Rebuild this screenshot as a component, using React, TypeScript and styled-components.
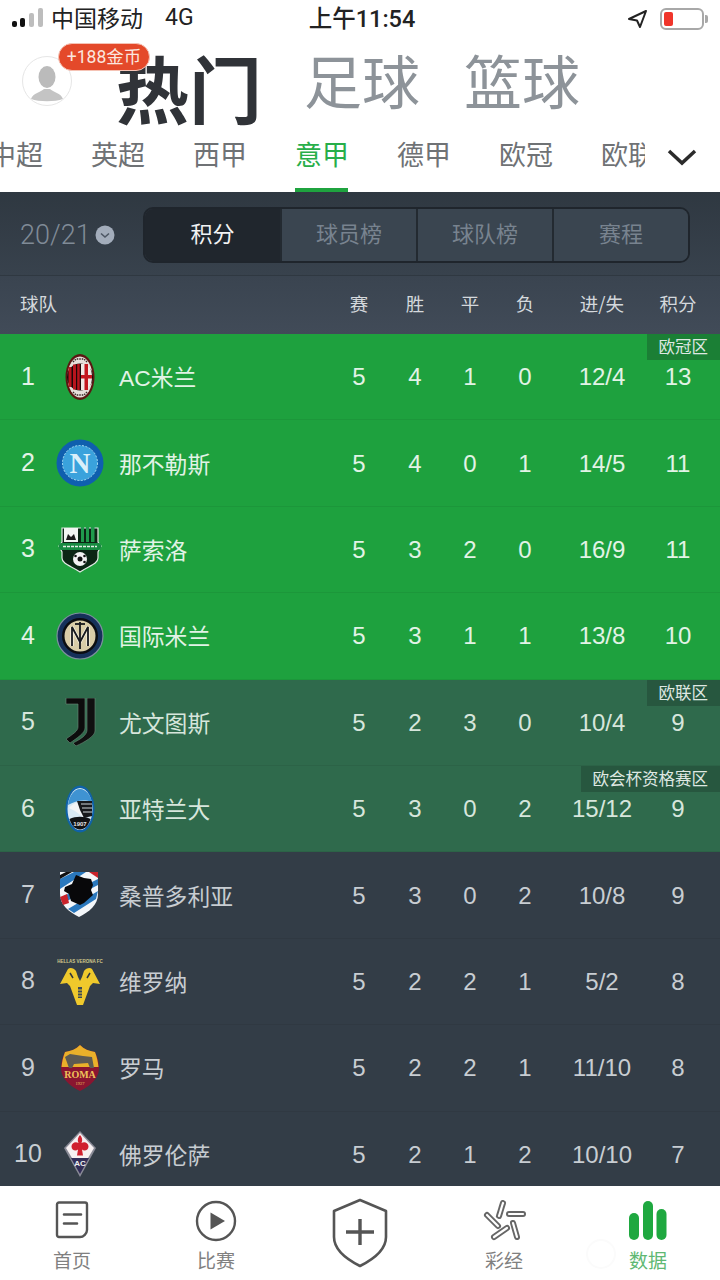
import React from 'react'
import styled, { createGlobalStyle } from 'styled-components'

const GlobalStyle = createGlobalStyle`
  html, body {
    margin: 0;
    padding: 0;
    background: #fff;
  }
  * {
    box-sizing: border-box;
  }
`

const Screen = styled.div`
  position: relative;
  width: 720px;
  height: 1280px;
  overflow: hidden;
  display: flex;
  flex-direction: column;
  background: #fff;
  font-family: Roboto, 'Noto Sans CJK SC', sans-serif;
`

const StatusBar = styled.div`
  height: 38px;
  flex: none;
  display: grid;
  grid-template-columns: 1fr auto 1fr;
  align-items: center;
  padding: 0 16px 0 12px;
  color: #222;
  font-size: 23px;
`

const StatusLeft = styled.div`
  display: flex;
  align-items: center;
  gap: 7px;
`

const StatusRight = styled.div`
  display: flex;
  align-items: center;
  justify-content: flex-end;
  gap: 12px;
`

const Carrier = styled.span`
  margin-top: -4px;
`

const Network = styled.span`
  margin: -4px 0 0 15px;
  font-size: 23px;
`

const Clock = styled.div`
  margin: -4px 0 0 8px;
  font-weight: 500;
  font-size: 23.5px;
`

const Battery = styled.div`
  width: 44px;
  height: 22px;
  border: 2px solid #a8a8a8;
  border-radius: 6px;
  padding: 2px;
  position: relative;

  &::before {
    content: '';
    display: block;
    width: 9px;
    height: 100%;
    background: #f0352b;
    border-radius: 2px;
  }

  &::after {
    content: '';
    position: absolute;
    right: -6px;
    top: 5px;
    width: 3px;
    height: 8px;
    background: #a8a8a8;
    border-radius: 0 2px 2px 0;
  }
`

const Header = styled.div`
  height: 92px;
  flex: none;
  display: flex;
  align-items: flex-start;
  padding-left: 22px;
`

const AvatarWrap = styled.div`
  position: relative;
  width: 50px;
  height: 50px;
  margin-top: 18px;
  margin-right: 44px;
`

const Avatar = styled.div`
  width: 50px;
  height: 50px;
  border-radius: 50%;
  border: 1px solid #e6e6e6;
  overflow: hidden;
  background: #fff;
`

const CoinBadge = styled.div`
  position: absolute;
  left: 36px;
  top: -13px;
  width: 92px;
  height: 28px;
  z-index: 2;
  border-radius: 14px;
  background: #e4492a;
  border: 1px solid #f5c3b5;
  color: #fbe6df;
  font-size: 17.5px;
  line-height: 26px;
  text-align: center;
  white-space: nowrap;
`

const SportTitle = styled.div<{ $active?: boolean }>`
  font-family: 'Noto Sans CJK SC', sans-serif;
  font-size: ${(p) => (p.$active ? 73 : 58)}px;
  font-weight: ${(p) => (p.$active ? 700 : 400)};
  line-height: ${(p) => (p.$active ? 84 : 72)}px;
  color: ${(p) => (p.$active ? '#303338' : '#8d9399')};
  margin-right: ${(p) => (p.$active ? 42 : 44)}px;
  margin-top: ${(p) => (p.$active ? 6 : 5)}px;
  white-space: nowrap;
`

const LeagueBar = styled.div`
  height: 62px;
  flex: none;
  display: flex;
  padding-right: 24px;
`

const LeagueScroller = styled.div`
  width: 645px;
  overflow: hidden;
  flex: none;
`

const LeagueTrack = styled.div`
  display: flex;
  gap: 49px;
  margin-left: -11px;
  height: 100%;
`

const LeagueTab = styled.div<{ $active?: boolean }>`
  flex: none;
  width: 53px;
  height: 100%;
  padding-top: 4px;
  font-family: 'Noto Sans CJK SC', sans-serif;
  font-size: 27px;
  line-height: 40px;
  white-space: nowrap;
  color: ${(p) => (p.$active ? '#27ae49' : '#6f7275')};
  border-bottom: 4px solid ${(p) => (p.$active ? '#1fa33f' : 'transparent')};
`

const ExpandButton = styled.div`
  flex: 1;
  display: flex;
  align-items: center;
  justify-content: center;
  padding: 0 0 8px 22px;
`

const Board = styled.div`
  flex: 1;
  min-height: 0;
  overflow: hidden;
  background: #333d47;
`

const Toolbar = styled.div`
  height: 84px;
  display: flex;
  align-items: center;
  padding: 2px 30px 0 20px;
  background: linear-gradient(#2f3841, #38424d);
  border-bottom: 1px solid #2f3841;
`

const Season = styled.div`
  display: flex;
  align-items: center;
  gap: 4px;
  width: 123px;
  flex: none;
  color: #808b97;
  font-size: 27px;
  font-weight: 300;
`

const Segments = styled.div`
  flex: 1;
  height: 56px;
  display: grid;
  grid-template-columns: 135px 136px 136px 1fr;
  border: 2px solid #1f252c;
  border-radius: 10px;
  overflow: hidden;
`

const Segment = styled.div<{ $active?: boolean }>`
  display: flex;
  align-items: center;
  justify-content: center;
  padding-bottom: 5px;
  font-family: 'Noto Sans CJK SC', sans-serif;
  font-size: 22px;
  color: ${(p) => (p.$active ? '#f2f3f4' : '#78838f')};
  background: ${(p) => (p.$active ? '#20262d' : '#3a4550')};
  border-left: ${(p) => (p.$active ? 'none' : '2px solid #232a31')};
`

const columns = '56px 48px 227px 56px 56px 54px 56px 98px 54px 15px'

const TableHead = styled.div`
  height: 58px;
  display: grid;
  grid-template-columns: ${columns};
  align-items: center;
  padding-bottom: 4px;
  background: linear-gradient(#3a4450, #414b58);
  color: #d4d8dc;
  font-family: 'Noto Sans CJK SC', sans-serif;
  font-size: 18.5px;
`

const TeamHead = styled.div`
  grid-column: 1 / span 3;
  padding-left: 20px;
`

const StatHead = styled.div`
  text-align: center;
  white-space: nowrap;
`

const zoneBackground = {
  top: '#1ea13e',
  mid: '#2f6a4c',
  none: '#333d47',
}

const zoneColor = {
  top: '#e2f3e6',
  mid: '#d7e6dc',
  none: '#c8cdd2',
}

type Zone = keyof typeof zoneBackground

const Row = styled.div<{ $zone: Zone }>`
  position: relative;
  height: 86.4px;
  display: grid;
  grid-template-columns: ${columns};
  align-items: center;
  background: ${(p) => zoneBackground[p.$zone]};
  color: ${(p) => zoneColor[p.$zone]};
  border-bottom: 1px solid rgba(0, 0, 0, 0.06);
  font-family: 'Liberation Sans', 'Noto Sans CJK SC', sans-serif;
`

const Rank = styled.div`
  text-align: center;
  font-size: 25px;
  margin-top: -1px;
`

const Crest = styled.div`
  width: 48px;
  height: 48px;
`

const TeamName = styled.div`
  padding-left: 15px;
  font-size: 22.8px;
  white-space: nowrap;
`

const Stat = styled.div`
  text-align: center;
  margin-top: 1px;
  font-size: 24px;
`

const ZoneTag = styled.div`
  position: absolute;
  right: 0;
  top: 0;
  height: 26px;
  padding: 0 12px;
  background: rgba(20, 40, 34, 0.28);
  font-family: 'Noto Sans CJK SC', sans-serif;
  font-size: 16.5px;
  line-height: 24px;
  color: #dfe8e2;
`

const TabBar = styled.div`
  height: 94px;
  flex: none;
  display: grid;
  grid-template-columns: repeat(5, 144px);
  background: #fff;
`

const TabItem = styled.div<{ $active?: boolean }>`
  display: flex;
  flex-direction: column;
  align-items: center;
  padding-top: 14px;
  font-family: 'Noto Sans CJK SC', sans-serif;
  font-size: 19px;
  line-height: 24px;
  color: ${(p) => (p.$active ? '#5fb873' : '#808080')};
`

const TabIcon = styled.div`
  height: 48px;
  display: flex;
  align-items: flex-start;
  justify-content: center;
`

const ShieldTab = styled.div`
  display: flex;
  justify-content: center;
  padding-top: 12px;
`

const Watermark = styled.div`
  position: absolute;
  left: 586px;
  top: 1239px;
  width: 30px;
  height: 30px;
  border: 2px solid #fbfbfb;
  border-radius: 50%;
`

const Signal = () => (
  <svg width="32" height="24" viewBox="0 0 32 24">
    <rect x="0" y="14" width="5" height="6" rx="2" fill="#111" />
    <rect x="8" y="11" width="5" height="9" rx="2" fill="#111" />
    <rect x="17" y="6" width="5" height="14" rx="2" fill="#bdbdbd" />
    <rect x="26" y="1" width="5" height="19" rx="2" fill="#bdbdbd" />
  </svg>
)

const LocationArrow = () => (
  <svg width="21" height="20" viewBox="0 0 21 20">
    <path d="M19 2 2 10l8 1.5L13 18z" fill="none" stroke="#222" strokeWidth="2" strokeLinejoin="round" />
  </svg>
)

const Chevron = () => (
  <svg width="30" height="18" viewBox="0 0 30 18">
    <path d="M2 3l13 12L28 3" fill="none" stroke="#2b2b2b" strokeWidth="3.5" />
  </svg>
)

const SeasonChevron = () => (
  <svg width="20" height="20" viewBox="0 0 20 20">
    <circle cx="10" cy="10" r="9.5" fill="#a3adbb" />
    <path d="M6 8.5l4 3.5 4-3.5" fill="none" stroke="#4d5764" strokeWidth="1.6" />
  </svg>
)

const AvatarFigure = () => (
  <svg width="48" height="48" viewBox="0 0 48 48">
    <ellipse cx="24" cy="20" rx="8.5" ry="11" fill="#bbb" />
    <path d="M8 42c2-6 10-7 13-10h6c3 3 11 4 13 10-8 3-24 3-32 0z" fill="#c4c4c4" />
  </svg>
)

const MilanCrest = () => (
  <svg viewBox="0 0 48 48">
    <ellipse cx="24" cy="24" rx="14.5" ry="23" fill="#5a1712" />
    <ellipse cx="24" cy="24" rx="12.5" ry="20.5" fill="#e6dfda" />
    <path d="M17 9l3-3h8l3 3M17 39l3 3h8l3-3" fill="none" stroke="#3a2a28" strokeWidth="1.4" strokeDasharray="1.5 1" />
    <ellipse cx="24" cy="24" rx="13" ry="13.5" fill="#1c0808" />
    <rect x="12.5" y="14" width="3" height="20" rx="1" fill="#b8141d" />
    <rect x="17" y="11.5" width="3" height="25" fill="#b8141d" />
    <rect x="21.2" y="11" width="2.5" height="26" fill="#b8141d" />
    <path d="M25 11h5c3 1 6 6 6 13s-3 12-6 13h-5z" fill="#efe9e6" />
    <rect x="28.5" y="11" width="3.5" height="26" fill="#c3171f" />
    <rect x="25" y="22" width="11" height="3.5" fill="#c3171f" />
  </svg>
)

const NapoliCrest = () => (
  <svg viewBox="0 0 48 48">
    <circle cx="24" cy="24" r="23.5" fill="#0f5fae" />
    <circle cx="24" cy="24" r="17.5" fill="#3aa2dc" stroke="#a8dcf3" strokeWidth="1" strokeDasharray="2 1.5" />
    <text x="24" y="34" textAnchor="middle" fontFamily="'Liberation Serif', serif" fontSize="29" fontWeight="700" fill="#d9f0fa">
      N
    </text>
  </svg>
)

const SassuoloCrest = () => (
  <svg viewBox="0 0 48 48">
    <path d="M6 3h36v14l3 4-3 6v6c0 6-9 8-18 14-9-6-18-8-18-14v-6l-3-6 3-4z" fill="#0b2514" stroke="#dfeae2" strokeWidth="1.2" />
    <rect x="8" y="3" width="14" height="14" fill="#f2f5f2" />
    <path d="M10 15l2-6 3 3 3-3 2 6z" fill="#1b1b1b" />
    <rect x="25" y="2" width="3" height="15" fill="#1f9a4c" />
    <rect x="30" y="2" width="3" height="15" fill="#1f9a4c" />
    <rect x="35" y="2" width="3.5" height="15" fill="#1f9a4c" />
    <rect x="3" y="18" width="42" height="7" rx="2" fill="#178a41" />
    <path d="M7 21.5h34" stroke="#e4efe7" strokeWidth="1.6" strokeDasharray="3 1" />
    <circle cx="24" cy="34" r="7" fill="#f3f3f3" />
    <circle cx="24" cy="34" r="2.5" fill="#111" />
    <circle cx="19.5" cy="31" r="1.3" fill="#111" />
    <circle cx="28.5" cy="37" r="1.3" fill="#111" />
    <circle cx="28.5" cy="31" r="1.3" fill="#111" />
  </svg>
)

const InterCrest = () => (
  <svg viewBox="0 0 48 48">
    <circle cx="24" cy="24" r="23" fill="#16315a" stroke="#7d8f9e" strokeWidth="1.2" />
    <circle cx="24" cy="24" r="18" fill="#0b0d11" />
    <circle cx="24" cy="24" r="15.5" fill="#d9cda8" />
    <g fill="none" stroke="#f4eedd" strokeWidth="3.6">
      <path d="M16 34V15l8 15 8-15v19" />
    </g>
    <g fill="none" stroke="#17191e" strokeWidth="1.8">
      <path d="M16 34V15l8 15 8-15v19" />
      <path d="M24 10v27" />
      <path d="M19 12h10" />
    </g>
  </svg>
)

const JuveCrest = () => (
  <svg viewBox="0 0 48 48">
    <g stroke="#6b8a78" strokeWidth="0.6">
      <path d="M10 0h19v30c0 5-8 10-15 15l-4-4c7-5 12-8 12-12V6H10z" fill="#0c0c0c" />
      <path d="M31 0h8v33c0 5-10 11-19 15l-3-3c8-4 14-8 14-13z" fill="#101010" />
    </g>
  </svg>
)

const AtalantaCrest = () => (
  <svg viewBox="0 0 48 48">
    <ellipse cx="24" cy="24" rx="14.5" ry="23.5" fill="#0f62a8" />
    <ellipse cx="24" cy="24" rx="12.5" ry="21" fill="#d8e8f3" />
    <path d="M12 20c1-9 6-16 12-16s11 7 12 13c-8-3-17-1-24 3z" fill="#3f93d2" />
    <path d="M13 23c5-6 13-8 23-6v13l-9 2-8-6z" fill="#f2f4f6" />
    <path d="M21 16h15v15l-8 2-4-8z" fill="#17181b" />
    <path d="M25 19h11M26 23h10M27 27h9" stroke="#cfd4d8" strokeWidth="1" />
    <path d="M13.5 34c6-3 15-3 21 0-2 7-6 10.5-10.5 10.5S15.5 41 13.5 34z" fill="#101114" />
    <text x="24" y="41" textAnchor="middle" fontFamily="'Liberation Sans', sans-serif" fontSize="6" fontWeight="700" fill="#e8e8e8">
      1907
    </text>
  </svg>
)

const SampdoriaCrest = () => (
  <svg viewBox="0 0 48 48">
    <path d="M4 1h38v22c0 11-9 18-19 23C13 41 4 34 4 23z" fill="#f4f7fa" />
    <path d="M4 8 18 1h12L4 18zM4 27 42 8v6L7 32zM12 38l30-18-2 8-22 14z" fill="#2a78bd" />
    <path d="M4 4l6-3h6L4 8z" fill="#111" />
    <path d="M4 26l7-3 2 9-6 2z" fill="#c9232b" />
    <path d="M33 1h9v6z" fill="#c9232b" />
    <path d="M9 16l7-3 4-9 8 3 7 1 2 6-2 5 2 5-9 8-4 2-9-4-2-7-5-3z" fill="#08080a" />
  </svg>
)

const VeronaCrest = () => (
  <svg viewBox="0 0 48 48">
    <text x="24" y="6" textAnchor="middle" fontFamily="'Liberation Sans', sans-serif" fontSize="4.5" fontWeight="700" fill="#cfc78a">
      HELLAS VERONA FC
    </text>
    <path d="M4 27 12 12c2-2 6-1 8 2l2 6 2 4 2-4 2-6c2-3 6-4 8-2l8 15-7-1-3 3-7 19h-6l-7-19-3-3z" fill="#efc92c" />
    <path d="M14 16l3 5M34 16l-3 5" stroke="#30363d" strokeWidth="1.5" />
    <rect x="22" y="30" width="4" height="11" fill="#3d4a55" />
    <path d="M22 33h4M22 36h4M22 39h4" stroke="#efc92c" strokeWidth="1.2" />
  </svg>
)

const RomaCrest = () => (
  <svg viewBox="0 0 48 48">
    <path d="M24 1c4 4 9 6 15 7 4 8 5 16 3 22-3 8-10 13-18 17C16 43 9 38 6 30 4 24 5 16 9 8c6-1 11-3 15-7z" fill="#8a1530" />
    <path d="M24 1c4 4 9 6 15 7 2 5 3 10 3.5 15h-37C6 18 7 13 9 8c6-1 11-3 15-7z" fill="#eab02a" />
    <path d="M9 13l5-3 13 2 9 1 2 11h-4l-2-5-14 1-2 4h-3z" fill="#5d5a52" />
    <text x="24" y="34" textAnchor="middle" fontFamily="'Liberation Serif', serif" fontSize="10" fontWeight="700" fill="#eec35a">
      ROMA
    </text>
    <text x="24" y="41" textAnchor="middle" fontFamily="'Liberation Serif', serif" fontSize="4.5" fill="#eec35a">
      1927
    </text>
  </svg>
)

const FiorentinaCrest = () => (
  <svg viewBox="0 0 48 48">
    <path d="M24 1 40 18 24 47 8 18z" fill="#8a8b97" />
    <path d="M24 3 38 18 32 28H16L10 18z" fill="#f6f0f2" />
    <path d="M15 28h18L24 44z" fill="#322e58" />
    <path d="M24 5c2 2 3 5 1.5 8 3-2 7 0 7 3.5s-4 5.5-6.5 3l1 6h-6l1-6c-2.500 2.500-6.500.5-6.500-3s4-5.500 7-3.500c-1.500-3-.5-6 1.500-8z" fill="#d0202f" />
    <text x="24" y="36" textAnchor="middle" fontFamily="'Liberation Sans', sans-serif" fontSize="8" fontWeight="700" fill="#f2f2f2">
      AC
    </text>
  </svg>
)

const HomeIcon = () => (
  <svg width="36" height="40" viewBox="0 0 36 40">
    <path d="M5 2.500h26a2 2 0 0 1 2 2V30c0 3.500-3.500 7-7 7H5a2 2 0 0 1-2-2V4.500a2 2 0 0 1 2-2z" fill="none" stroke="#555" strokeWidth="2.4" />
    <path d="M10 14.500h17M10 23.500h13" stroke="#555" strokeWidth="2.6" strokeLinecap="round" />
  </svg>
)

const MatchIcon = () => (
  <svg width="42" height="42" viewBox="0 0 42 42">
    <circle cx="21" cy="21" r="19" fill="none" stroke="#555" strokeWidth="2.4" />
    <path d="M15.500 12.500 30 21l-14.500 8.500z" fill="#555" />
  </svg>
)

const ShieldIcon = () => (
  <svg width="56" height="70" viewBox="0 0 56 70">
    <path d="M28 2 54 13v26c0 13-14 23-26 29C16 62 2 52 2 39V13z" fill="none" stroke="#555" strokeWidth="2.6" strokeLinejoin="round" />
    <path d="M28 21v26M14 34h28" stroke="#555" strokeWidth="3.4" />
  </svg>
)

const tipsBars = [
  [21, 3, 17, 16],
  [27, 14, 41, 14],
  [31, 23, 35, 37],
  [25, 28, 12, 37],
  [5, 15, 16, 26],
]

const TipsIcon = () => (
  <svg width="44" height="42" viewBox="0 0 44 42">
    {tipsBars.map(([x1, y1, x2, y2]) => (
      <g key={`${x1}-${y1}`} strokeLinecap="round">
        <line x1={x1} y1={y1} x2={x2} y2={y2} stroke="#666" strokeWidth="6" />
        <line x1={x1} y1={y1} x2={x2} y2={y2} stroke="#fff" strokeWidth="2.2" />
      </g>
    ))}
  </svg>
)

const DataIcon = () => (
  <svg width="40" height="40" viewBox="0 0 40 40">
    <rect x="1" y="13" width="10" height="27" rx="5" fill="#1fa840" />
    <rect x="15" y="1" width="10" height="39" rx="5" fill="#1fa840" />
    <rect x="28.500" y="9" width="10" height="31" rx="5" fill="#1fa840" />
  </svg>
)

type Team = {
  rank: number
  name: string
  crest: React.FC
  stats: [number, number, number, number, string, number]
  zone: Zone
  tag?: string
}

const teams: Team[] = [
  { rank: 1, name: 'AC米兰', crest: MilanCrest, stats: [5, 4, 1, 0, '12/4', 13], zone: 'top', tag: '欧冠区' },
  { rank: 2, name: '那不勒斯', crest: NapoliCrest, stats: [5, 4, 0, 1, '14/5', 11], zone: 'top' },
  { rank: 3, name: '萨索洛', crest: SassuoloCrest, stats: [5, 3, 2, 0, '16/9', 11], zone: 'top' },
  { rank: 4, name: '国际米兰', crest: InterCrest, stats: [5, 3, 1, 1, '13/8', 10], zone: 'top' },
  { rank: 5, name: '尤文图斯', crest: JuveCrest, stats: [5, 2, 3, 0, '10/4', 9], zone: 'mid', tag: '欧联区' },
  { rank: 6, name: '亚特兰大', crest: AtalantaCrest, stats: [5, 3, 0, 2, '15/12', 9], zone: 'mid', tag: '欧会杯资格赛区' },
  { rank: 7, name: '桑普多利亚', crest: SampdoriaCrest, stats: [5, 3, 0, 2, '10/8', 9], zone: 'none' },
  { rank: 8, name: '维罗纳', crest: VeronaCrest, stats: [5, 2, 2, 1, '5/2', 8], zone: 'none' },
  { rank: 9, name: '罗马', crest: RomaCrest, stats: [5, 2, 2, 1, '11/10', 8], zone: 'none' },
  { rank: 10, name: '佛罗伦萨', crest: FiorentinaCrest, stats: [5, 2, 1, 2, '10/10', 7], zone: 'none' },
]

const leagues = ['中超', '英超', '西甲', '意甲', '德甲', '欧冠', '欧联']
const statHeads = ['赛', '胜', '平', '负', '进/失', '积分']

export default function App() {
  return (
    <Screen>
      <GlobalStyle />
      <StatusBar>
        <StatusLeft>
          <Signal />
          <Carrier>中国移动</Carrier>
          <Network>4G</Network>
        </StatusLeft>
        <Clock>上午11:54</Clock>
        <StatusRight>
          <LocationArrow />
          <Battery />
        </StatusRight>
      </StatusBar>

      <Header>
        <AvatarWrap>
          <Avatar>
            <AvatarFigure />
          </Avatar>
          <CoinBadge>+188金币</CoinBadge>
        </AvatarWrap>
        <SportTitle $active>热门</SportTitle>
        <SportTitle>足球</SportTitle>
        <SportTitle>篮球</SportTitle>
      </Header>

      <LeagueBar>
        <LeagueScroller>
          <LeagueTrack>
            {leagues.map((league) => (
              <LeagueTab key={league} $active={league === '意甲'}>
                {league}
              </LeagueTab>
            ))}
          </LeagueTrack>
        </LeagueScroller>
        <ExpandButton>
          <Chevron />
        </ExpandButton>
      </LeagueBar>

      <Board>
        <Toolbar>
          <Season>
            20/21
            <SeasonChevron />
          </Season>
          <Segments>
            <Segment $active>积分</Segment>
            <Segment>球员榜</Segment>
            <Segment>球队榜</Segment>
            <Segment>赛程</Segment>
          </Segments>
        </Toolbar>

        <TableHead>
          <TeamHead>球队</TeamHead>
          {statHeads.map((head) => (
            <StatHead key={head}>{head}</StatHead>
          ))}
        </TableHead>

        {teams.map((team) => {
          const CrestImage = team.crest
          return (
            <Row key={team.rank} $zone={team.zone}>
              <Rank>{team.rank}</Rank>
              <Crest>
                <CrestImage />
              </Crest>
              <TeamName>{team.name}</TeamName>
              {team.stats.map((value, index) => (
                <Stat key={index}>{value}</Stat>
              ))}
              {team.tag && <ZoneTag>{team.tag}</ZoneTag>}
            </Row>
          )
        })}
      </Board>

      <TabBar>
        <TabItem>
          <TabIcon>
            <HomeIcon />
          </TabIcon>
          首页
        </TabItem>
        <TabItem>
          <TabIcon>
            <MatchIcon />
          </TabIcon>
          比赛
        </TabItem>
        <ShieldTab>
          <ShieldIcon />
        </ShieldTab>
        <TabItem>
          <TabIcon>
            <TipsIcon />
          </TabIcon>
          彩经
        </TabItem>
        <TabItem $active>
          <TabIcon>
            <DataIcon />
          </TabIcon>
          数据
        </TabItem>
      </TabBar>
      <Watermark />
    </Screen>
  )
}
